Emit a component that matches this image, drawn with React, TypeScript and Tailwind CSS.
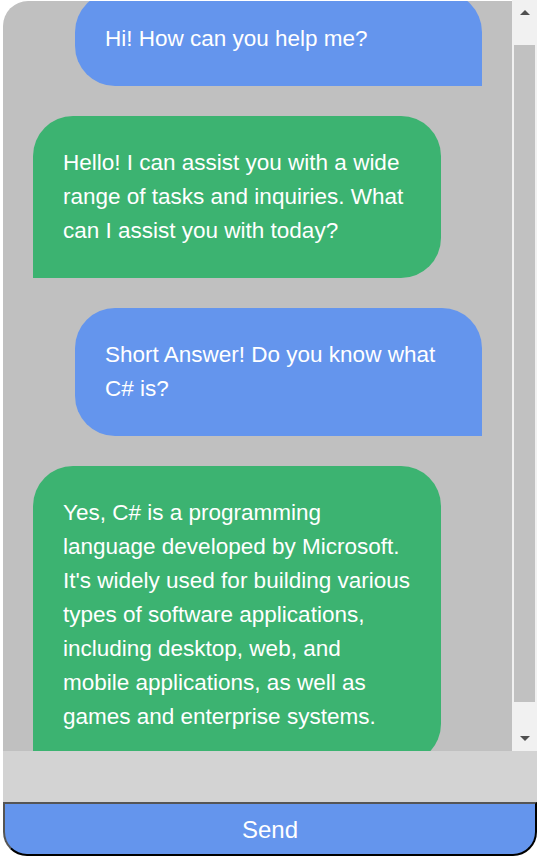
const messages = [
  { from: 'user', text: 'Hi! How can you help me?' },
  {
    from: 'bot',
    text: 'Hello! I can assist you with a wide range of tasks and inquiries. What can I assist you with today?',
  },
  { from: 'user', text: 'Short Answer! Do you know what C# is?' },
  {
    from: 'bot',
    text: "Yes, C# is a programming language developed by Microsoft. It's widely used for building various types of software applications, including desktop, web, and mobile applications, as well as games and enterprise systems.",
  },
]

const Arrow = ({ down }: { down?: boolean }) => (
  <svg width="10" height="5" viewBox="0 0 10 5" className="fill-[#505050]">
    {down ? <path d="M0 0h10L5 5z" /> : <path d="M0 5h10L5 0z" />}
  </svg>
)

const Scrollbar = () => (
  <div className="flex w-[25px] flex-col items-center bg-[#f1f1f1]">
    <div className="flex h-[25px] w-full items-center justify-center">
      <Arrow />
    </div>
    <div className="mt-[20px] h-[657px] w-[21px] bg-[#c1c1c1]" />
    <div className="mt-auto flex h-[25px] w-full items-center justify-center">
      <Arrow down />
    </div>
  </div>
)

const Bubble = ({ from, text }: { from: string; text: string }) => {
  const user = from === 'user'
  return (
    <div
      className={
        user
          ? 'w-[407px] self-end rounded-[40px] rounded-br-none bg-[#6495ed] px-[30px] py-[30px]'
          : 'w-[408px] self-start rounded-[40px] rounded-bl-none bg-[#3cb371] px-[30px] py-[30px]'
      }
    >
      <p className="text-[22.5px] leading-[34px] text-white">{text}</p>
    </div>
  )
}

export default function App() {
  return (
    <div className="flex h-[856px] w-[537px] flex-col bg-white pl-[3px] font-['Liberation_Sans',Arial,sans-serif]">
      <div className="flex h-[751px]">
        <div className="mt-[1px] flex-1 overflow-hidden rounded-tl-[25px] bg-[#c0c0c0]">
          <div className="-mt-[9px] flex flex-col gap-[30px] px-[30px]">
            {messages.map((m, i) => (
              <Bubble key={i} from={m.from} text={m.text} />
            ))}
          </div>
        </div>
        <Scrollbar />
      </div>
      <div className="h-[51px] bg-[#d3d3d3]" />
      <button className="h-[54px] rounded-b-[24px] border-2 border-t-[#555] border-l-[#555] border-r-black border-b-black bg-[#6495ed] pt-[2px] text-[24px] text-white">
        Send
      </button>
    </div>
  )
}
